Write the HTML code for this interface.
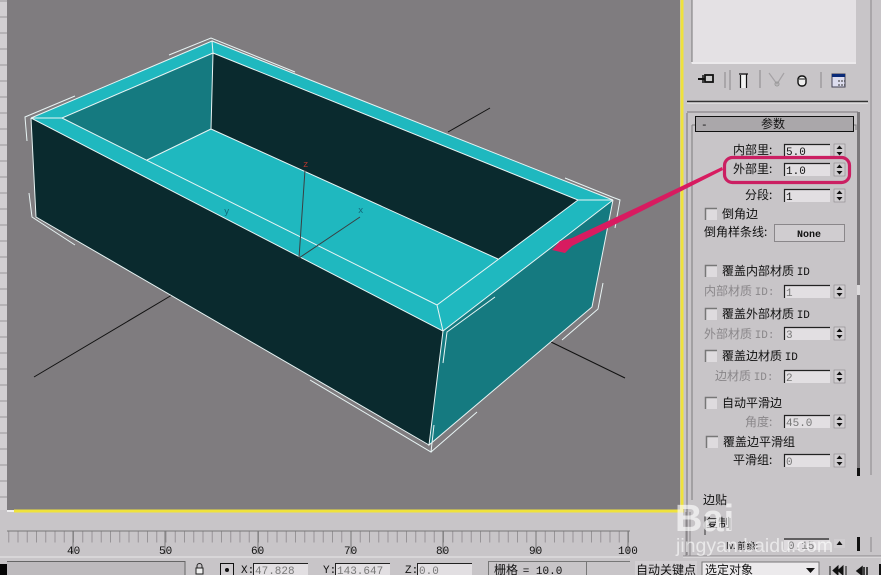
<!DOCTYPE html>
<html><head><meta charset="utf-8"><style>
html,body{margin:0;padding:0;background:#c8c5c8;width:881px;height:575px;overflow:hidden}
svg{display:block}
text{font-family:"Noto Sans CJK SC","WenQuanYi Zen Hei",sans-serif;font-size:12px;fill:#111}
.m{font-family:"Liberation Mono",monospace;font-size:11px}
.d{fill:#8a878a}
.f{fill:#777;font-family:"Liberation Mono",monospace;font-size:11px}
</style></head><body>
<svg width="881" height="575" viewBox="0 0 881 575" xmlns="http://www.w3.org/2000/svg">
<defs>
<g id="sp"><rect x="0" y="0" width="11" height="13" fill="#d0cdd0" stroke="#8a878a" stroke-width=".6"/><path d="M5.5 1.5l3 3.5h-6zM5.5 11.5l3-3.5h-6z" fill="#111"/></g>
<g id="fd"><rect x="0" y="0" width="46" height="13" fill="#e2dfe2"/><path d="M.5 13V.5H46" fill="none" stroke="#222" stroke-width="1.2"/></g>
<g id="cb"><rect x="0" y="0" width="12" height="12" fill="#dedbde"/><path d="M.5 12V.5H12" fill="none" stroke="#777" stroke-width="1.5"/></g>
</defs>
<rect width="881" height="575" fill="#c8c5c8"/>
<!-- left strip -->
<rect width="7" height="510" fill="#d2cfd2"/>
<path d="M0 1H7M0 17H7M0 33H7M0 49H7M0 65H7M0 81H7M0 97H7M0 113H7M0 129H7M0 145H7M0 161H7M0 177H7M0 193H7M0 209H7M0 225H7M0 241H7M0 257H7M0 273H7M0 289H7M0 305H7M0 321H7M0 337H7M0 353H7M0 369H7M0 385H7M0 401H7M0 417H7M0 433H7M0 449H7M0 465H7M0 481H7M0 497H7" stroke="#9a979a"/>
<!-- viewport -->
<rect x="7" y="0" width="673" height="510" fill="#7f7c7f"/>
<path d="M14 511H682V0" fill="none" stroke="#efe23c" stroke-width="3"/>
<rect x="7" y="510" width="7" height="2" fill="#eee"/>
<!-- grid axes -->
<path d="M490 108L448 132M34 377L172 295M551 342L625 378" stroke="#111" fill="none"/>
<!-- box -->
<polygon points="31,118 443,331 429,445 36,217" fill="#0a2a2e"/>
<polygon points="443,331 613,200 592,307 429,445" fill="#157a80"/>
<polygon points="31,118 212,41 613,200 443,331" fill="#1fb8bf"/>
<polygon points="62,118 213,53 211,129 147,160" fill="#157a80"/>
<polygon points="213,53 578,200 498,259 211,129" fill="#0a2a2e"/>
<polygon points="147,160 211,129 498,259 437,305" fill="#1fb8bf"/>
<g fill="none" stroke="#e8f4f4" stroke-width="1">
<path d="M31,118L62,118L213,53L212,41L31,118M212,41L613,200L578,200L213,53M213,53L211,129L147,160M211,129L498,259M62,118L437,305L578,200M437,305L443,331L613,200M31,118L443,331L429,445L36,217L31,118M443,331L429,445L592,307L613,200"/>
<path d="M75,96L25,117L27,141M169,55L211,38L295,72M29,193L32,217L75,245M310,380L431,452L434,425M431,452L477,412M562,340L598,309L603,283M443,363L447,332L495,297M615,228L620,200L612,197L565,178"/>
</g>
<!-- gizmo -->
<path d="M305,170L299,258L360,217" fill="none" stroke="#3a3f42"/>
<text x="303" y="167" style="font-size:9px;fill:#b8352c" class="m">z</text>
<text x="358" y="213" style="font-size:9px;fill:#167" class="m">x</text>
<text x="224" y="214" style="font-size:9px;fill:#167" class="m">y</text>
<!-- right panel -->
<rect x="692" y="0" width="164" height="64" fill="#e4e1e4"/>
<path d="M692 0V63H856" fill="none" stroke="#f4f2f4" stroke-width="1"/>
<path d="M692 0V62" stroke="#777"/>
<path d="M871 0V475" stroke="#8a878a"/>
<path d="M730 70V90M725 72V88M760 70V88M821 72V88" stroke="#8a878a"/>
<!-- toolbar icons -->
<path d="M698 79H705" stroke="#111" stroke-width="2"/><path d="M703 75V83" stroke="#111" stroke-width="1.5"/><rect x="705" y="75" width="8" height="7" fill="#ccc" stroke="#111" stroke-width="1.8"/>
<rect x="741" y="75" width="5" height="13" fill="#f2f2f2"/><path d="M739 74H748M746.500 74V88M740.500 75V88" stroke="#111" stroke-width="1.200" fill="none"/>
<path d="M769 73L777 84L784 73" stroke="#a5a2a5" fill="none" stroke-width="1.2"/><circle cx="777" cy="84" r="2" fill="none" stroke="#999"/>
<rect x="798" y="76" width="8" height="10" rx="3.500" fill="#eee" stroke="#111" stroke-width="1.400"/><path d="M799 79H805" stroke="#111"/>
<rect x="832" y="74" width="13" height="13" fill="#dde" stroke="#445"/><rect x="832" y="74" width="13" height="3" fill="#0a2a78"/><path d="M838 81h7M838 85h7" stroke="#333" stroke-dasharray="2 1"/>
<!-- divider -->
<path d="M687 101.500H868" stroke="#333" stroke-width="1.400"/><path d="M687 103H868" stroke="#eee"/>
<!-- rollout -->
<path d="M687 113V555M687 112H858" stroke="#8a878a" fill="none" stroke-width="1.300"/>
<rect x="857" y="112" width="3" height="356" fill="#7b787b"/><rect x="857" y="468" width="3" height="8" fill="#111"/>
<rect x="857" y="285" width="3" height="10" fill="#dcdadc"/>
<path d="M692 125V500M692 125H696M853 125H856V130" stroke="#7d7a7d" fill="none"/>
<rect x="695.500" y="116.500" width="158" height="15" fill="#aaa7aa" stroke="#111"/>
<text x="701" y="128" class="m">-</text>
<text x="761" y="128">参数</text>
<text x="733" y="154">内部里:</text><use href="#fd" x="784" y="144"/><text x="786" y="155" class="m">5.0</text><use href="#sp" x="834" y="144"/>
<text x="733" y="173">外部里:</text><use href="#fd" x="784" y="163"/><text x="786" y="174" class="m">1.0</text><use href="#sp" x="834" y="163"/>
<text x="745" y="199">分段:</text><use href="#fd" x="784" y="189"/><text x="786" y="200" class="m">1</text><use href="#sp" x="834" y="189"/>
<use href="#cb" x="705" y="208"/><text x="722" y="218">倒角边</text>
<text x="704" y="236">倒角样条线:</text>
<rect x="774.500" y="224.500" width="70" height="17" fill="#d0cdd0" stroke="#8a878a"/><text x="797" y="237" style="font-size:10px;font-family:'Liberation Mono',monospace;font-weight:bold">None</text>
<use href="#cb" x="705" y="265"/><text x="722" y="275">覆盖内部材质 <tspan class="m">ID</tspan></text>
<text x="704" y="295" class="d">内部材质 <tspan style="font-family:'Liberation Mono',monospace;font-size:11px">ID:</tspan></text><use href="#fd" x="784" y="285"/><text x="786" y="296" class="f">1</text><use href="#sp" x="834" y="285"/>
<use href="#cb" x="705" y="308"/><text x="722" y="318">覆盖外部材质 <tspan class="m">ID</tspan></text>
<text x="704" y="338" class="d">外部材质 <tspan style="font-family:'Liberation Mono',monospace;font-size:11px">ID:</tspan></text><use href="#fd" x="784" y="327"/><text x="786" y="338" class="f">3</text><use href="#sp" x="834" y="327"/>
<use href="#cb" x="705" y="350"/><text x="722" y="360">覆盖边材质 <tspan class="m">ID</tspan></text>
<text x="715" y="380" class="d">边材质 <tspan style="font-family:'Liberation Mono',monospace;font-size:11px">ID:</tspan></text><use href="#fd" x="784" y="370"/><text x="786" y="381" class="f">2</text><use href="#sp" x="834" y="370"/>
<use href="#cb" x="705" y="397"/><text x="722" y="407">自动平滑边</text>
<text x="745" y="426" class="d">角度:</text><use href="#fd" x="784" y="415"/><text x="786" y="426" class="f">45.0</text><use href="#sp" x="834" y="415"/>
<use href="#cb" x="706" y="436"/><text x="723" y="446">覆盖边平滑组</text>
<text x="733" y="464">平滑组:</text><use href="#fd" x="784" y="454"/><text x="786" y="465" class="f">0</text><use href="#sp" x="834" y="454"/>
<text x="703" y="504">边贴</text>
<text x="706" y="527">复制</text><path d="M705 516V535M730 518V530" stroke="#333" fill="none"/>
<text x="726" y="549" style="font-size:9px">Iv. 前缘:</text>
<path d="M784 539H829" stroke="#222" stroke-width="1.300"/><rect x="784" y="540" width="46" height="10" fill="#dedbde"/>
<text x="788" y="549" class="f">0.15</text><rect x="834" y="539" width="11" height="9" fill="#d0cdd0"/><path d="M839.500 541l3 4h-6z" fill="#111"/>
<rect x="857" y="537" width="3" height="14" fill="#111"/><path d="M871 537V552" stroke="#8a878a"/>
<path d="M683 556H881" stroke="#8a878a"/><path d="M683 557H881" stroke="#e8e6e8"/>
<path d="M686 512V556M690 512V556" stroke="#8a878a"/>
<!-- timeline -->
<path d="M7 531H630" stroke="#777"/>
<line x1="8.250" y1="537" x2="629" y2="537" stroke="#979497" stroke-width="11" stroke-dasharray="1 8.250"/>
<path d="M73 531V554M165 531V554M258 531V554M351 531V554M443 531V554M536 531V554M628 531V554" stroke="#777"/>
<g class="m"><text x="67" y="554" class="m">40</text><text x="159" y="554" class="m">50</text><text x="251" y="554" class="m">60</text><text x="344" y="554" class="m">70</text><text x="436" y="554" class="m">80</text><text x="529" y="554" class="m">90</text><text x="618" y="554" class="m">100</text></g>
<!-- status -->
<path d="M0 557H630" stroke="#e8e6e8"/>
<rect x="0" y="564" width="7" height="11" fill="#050505"/>
<rect x="7" y="561.500" width="178" height="14" fill="#bdbabd"/><path d="M7 561.500H185V575" stroke="#666" fill="none"/>
<rect x="196" y="568" width="7" height="6" fill="#eee" stroke="#222"/><path d="M197 568v-2a2.500 2.500 0 0 1 5 0v2" stroke="#222" fill="none"/>
<rect x="220.500" y="563.500" width="13" height="13" fill="#d0cdd0" stroke="#111"/><circle cx="227" cy="570" r="2" fill="#111"/>
<text x="241" y="573" class="m">X:</text>
<rect x="253" y="563" width="55" height="13" fill="#e2dfe2"/><path d="M253.500 576V563.500H308" stroke="#222" fill="none"/><text x="255" y="574" class="f">47.828</text>
<text x="323" y="573" class="m">Y:</text>
<rect x="335" y="563" width="55" height="13" fill="#e2dfe2"/><path d="M335.500 576V563.500H390" stroke="#222" fill="none"/><text x="337" y="574" class="f">143.647</text>
<text x="405" y="573" class="m">Z:</text>
<rect x="417" y="563" width="55" height="13" fill="#e2dfe2"/><path d="M417.500 576V563.500H472" stroke="#222" fill="none"/><text x="419" y="574" class="f">0.0</text>
<path d="M488.500 576V561.500H586.500V576M587 561.500H630" stroke="#777" fill="none"/>
<text x="494" y="574">栅格 <tspan class="m" dx="2">= 10.0</tspan></text>
<rect x="635" y="561" width="62" height="15" fill="#d2cfd2"/><text x="636" y="574">自动关键点</text>
<rect x="702" y="562" width="117" height="14" fill="#eceaec" stroke="#777"/><text x="705" y="574">选定对象</text>
<path d="M806 568h9l-4.500 5z" fill="#111"/>
<path d="M830 566V575M846 566V575M833 570.500L838 566V575ZM838 570.500L843 566V575Z" fill="#111" stroke="#111" stroke-width="1"/>
<path d="M857 571l5-4v8zM864 567V575M867 567V575" fill="#111" stroke="#111" stroke-width="1.500"/>
<rect x="879" y="564" width="2" height="11" fill="#111"/>
<!-- annotation -->
<rect x="724.500" y="157.500" width="125" height="25" rx="8" fill="none" stroke="#cb1f62" stroke-width="3.200"/>
<polygon points="722,167 723,170 640,212 572,246 565,253 552,250 560,241 572,238 640,206" fill="#d81b60"/>
<!-- watermark -->
<text x="675" y="531" style="font-family:'Liberation Sans',sans-serif;font-size:38px;font-weight:bold;fill:#fff;fill-opacity:.62">Bai</text>
<text x="676" y="552" style="font-family:'Liberation Sans',sans-serif;font-size:19.500px;fill:#fff;fill-opacity:.6">jingyan.baidu.com</text>
</svg>
</body></html>
